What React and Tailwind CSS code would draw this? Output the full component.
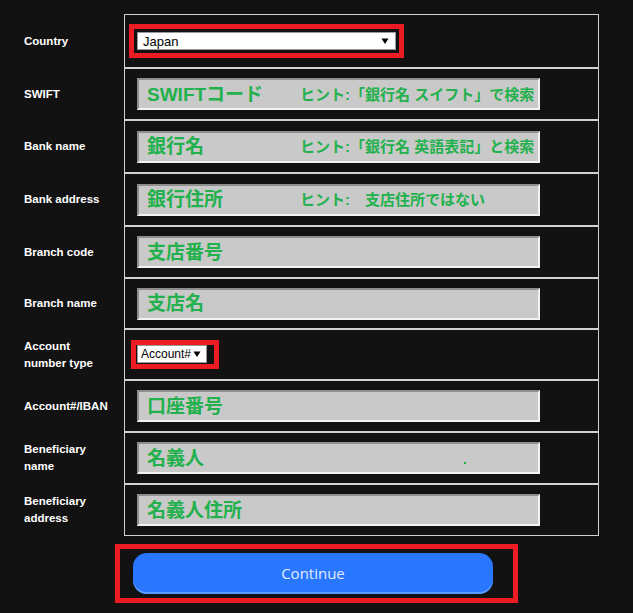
import React from 'react';

const GREEN = 'text-[#22b14c]';

const rows = [
  { label: 'SWIFT', main: 'SWIFTコード', hint: 'ヒント:「銀行名 スイフト」で検索', h: 'h-[52px]' },
  { label: 'Bank name', main: '銀行名', hint: 'ヒント:「銀行名 英語表記」と検索', h: 'h-[53px]' },
  { label: 'Bank address', main: '銀行住所', hint: 'ヒント:　支店住所ではない', h: 'h-[53px]' },
  { label: 'Branch code', main: '支店番号', h: 'h-[52px]' },
  { label: 'Branch name', main: '支店名', h: 'h-[51px]' },
];

const rowsAfter = [
  { label: 'Account#/IBAN', main: '口座番号', h: 'h-[52px]' },
  { label: 'Beneficiary name', main: '名義人', dot: true, h: 'h-[52px]' },
  { label: 'Beneficiary address', main: '名義人住所', h: 'h-[52px]' },
];

const Caret = () => (
  <svg width="8" height="8" viewBox="0 0 8 8" className="shrink-0">
    <path d="M0.5 1.5 L7.5 1.5 L4 7 Z" fill="#000" />
  </svg>
);

const FieldBox = ({ main, hint, dot }) => (
  <div className="ml-[12px] flex h-[32px] w-[403px] items-center border-2 border-t-[#8e8e8e] border-l-[#8e8e8e] border-r-[#f2f2f2] border-b-[#f2f2f2] bg-[#c9c9c9] pl-[8px] font-['Liberation_Sans','Noto_Sans_CJK_JP',sans-serif] font-bold">
    <span className={`w-[153px] shrink-0 whitespace-nowrap text-[19px] leading-none ${GREEN}`}>{main}</span>
    {hint && <span className={`whitespace-nowrap text-[15px] leading-none ${GREEN}`}>{hint}</span>}
    {dot && <span className="ml-[164px] mt-[10px] h-[2px] w-[2px] bg-[#22b14c]" />}
  </div>
);

const Row = ({ label, h, children }) => (
  <div className="flex">
    <div className="flex w-[100px] items-center">
      <span className="w-[88px] text-[11.5px] font-bold leading-[17px] text-white">{label}</span>
    </div>
    <div className={`flex flex-1 items-center border border-[#d2d2d2] ${h}`}>
      {children}
    </div>
  </div>
);

export default function App() {
  return (
    <div className="min-h-[613px] bg-[#121212] pt-[14px] font-['Liberation_Sans',sans-serif]">
      <div className="ml-[24px] w-[575px]">
        <Row label="Country" h="h-[54px]">
          <div className="ml-[4px] border-[5px] border-[#ed1c24] p-[3px]">
            <div className="flex h-[18px] w-[259px] items-center justify-between border border-[#9a9a9a] bg-white pl-[5px] pr-[6px]">
              <span className="text-[13px] leading-none text-black">Japan</span>
              <Caret />
            </div>
          </div>
        </Row>
        {rows.map((r) => (
          <Row key={r.label} label={r.label} h={r.h}>
            <FieldBox main={r.main} hint={r.hint} />
          </Row>
        ))}
        <Row label="Account number type" h="h-[51px]">
          <div className="ml-[6px] border-[5px] border-[#ed1c24] pl-[1px] pr-[7px] pb-[1px]">
            <div className="flex h-[18px] w-[70px] items-center justify-between border border-[#9a9a9a] bg-white pl-[3px] pr-[5px]">
              <span className="text-[12px] leading-none text-black">Account#</span>
              <Caret />
            </div>
          </div>
        </Row>
        {rowsAfter.map((r) => (
          <Row key={r.label} label={r.label} h={r.h}>
            <FieldBox main={r.main} dot={r.dot} />
          </Row>
        ))}
      </div>

      <div className="mt-[8px] flex justify-center pb-[10px]">
        <div className="flex h-[59px] w-[403px] items-center border-[5px] border-[#ed1c24] pl-[13px]">
          <button className="h-[41px] w-[360px] rounded-[14px] bg-[#2976ff] font-['Open_Sans',sans-serif] text-[15px] text-[#e2ecff] shadow-[inset_0_-2px_0_#5d9bff]">
            Continue
          </button>
        </div>
      </div>
    </div>
  );
}
